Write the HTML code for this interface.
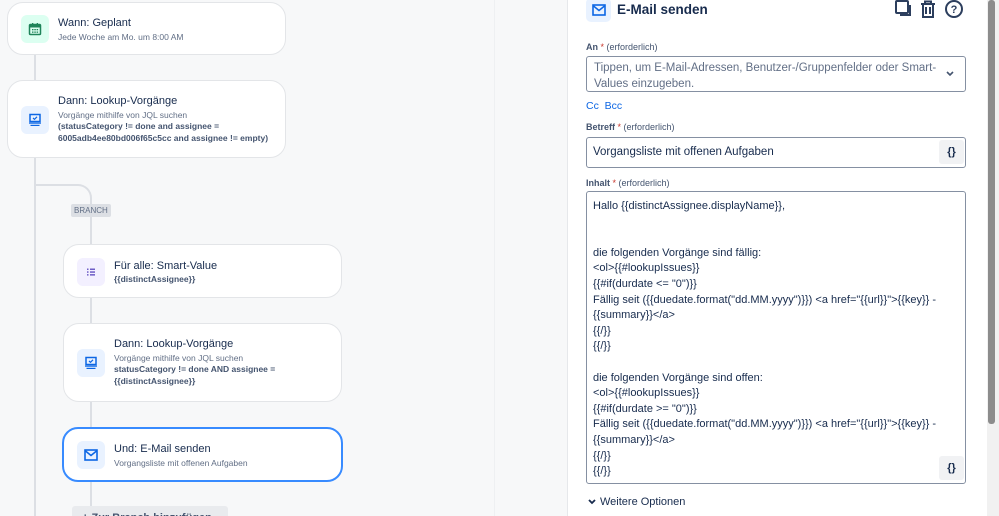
<!DOCTYPE html>
<html><head><meta charset="utf-8">
<style>
*{box-sizing:border-box;margin:0;padding:0}
html,body{width:999px;height:516px;overflow:hidden}
body{background:#f7f8f9;font-family:"Liberation Sans",sans-serif;color:#172b4d;position:relative}
.abs{position:absolute}
.line{position:absolute;background:#dcdfe4}
.card{position:absolute;background:#fff;border:1px solid #e3e5e8;border-radius:16px}
.ic{position:absolute;left:13px;width:28px;height:28px;border-radius:6px;display:flex;align-items:center;justify-content:center}
.t{position:absolute;left:50px;font-size:11px;color:#172b4d}
.s{font-size:8.5px;color:#626f86;margin-top:3px}
.b{font-size:8.5px;font-weight:bold;color:#44546f;line-height:12px}
.lbl{position:absolute;left:586px;font-size:9px;color:#44546f}
.lbl b{color:#44546f}
.lbl i{font-style:normal;color:#c9372c}
.inp{position:absolute;left:586px;width:380px;border:1px solid #8590a2;border-radius:3px;background:#fff;font-size:11.5px;color:#172b4d}
.br{position:absolute;width:25px;height:24px;background:#f1f2f4;border-radius:3px;font-size:11px;font-weight:bold;display:flex;align-items:center;justify-content:center;color:#172b4d}
</style></head><body>
<div class="line" style="left:34px;top:54px;width:2px;height:462px"></div>
<div class="abs" style="left:35px;top:184px;width:57px;height:60px;border-top:2px solid #dcdfe4;border-right:2px solid #dcdfe4;border-top-right-radius:14px"></div>
<div class="line" style="left:90px;top:297px;width:2px;height:219px"></div>
<div class="abs" style="left:71px;top:204px;background:#dcdfe4;color:#626f86;font-size:8px;padding:2px 3px;border-radius:2px">BRANCH</div>

<div class="card" style="left:7px;top:2px;width:279px;height:53px">
 <div class="ic" style="top:12px;background:#dcfff1"><svg width="14" height="14" viewBox="0 0 14 14"><rect x="1.5" y="2.5" width="11" height="10" rx="1" fill="none" stroke="#1f845a" stroke-width="1.5"/><rect x="1.5" y="2.5" width="11" height="3" fill="#1f845a"/><rect x="4" y="1" width="1.3" height="3" fill="#1f845a"/><rect x="8.7" y="1" width="1.3" height="3" fill="#1f845a"/><g fill="#1f845a"><rect x="4" y="7" width="1.5" height="1.3"/><rect x="6.3" y="7" width="1.5" height="1.3"/><rect x="8.6" y="7" width="1.5" height="1.3"/><rect x="4" y="9.5" width="1.5" height="1.3"/><rect x="6.3" y="9.5" width="1.5" height="1.3"/><rect x="8.6" y="9.5" width="1.5" height="1.3"/></g></svg></div>
 <div class="t" style="top:14px">Wann: Geplant<div class="s">Jede Woche am Mo. um 8:00 AM</div></div>
</div>

<div class="card" style="left:7px;top:80px;width:279px;height:78px">
 <div class="ic" style="top:25px;background:#e9f2ff"><svg width="14" height="14" viewBox="0 0 14 14"><rect x="2" y="1.5" width="10" height="7" fill="none" stroke="#0c66e4" stroke-width="1.5"/><path d="M5 5l1.5 1.3L9 3.8" stroke="#0c66e4" stroke-width="1.2" fill="none"/><rect x="1" y="9.5" width="12" height="1.2" fill="#0c66e4"/><rect x="2.5" y="11.8" width="9" height="1.2" fill="#0c66e4"/></svg></div>
 <div class="t" style="top:14px">Dann: Lookup-Vorgänge<div class="s">Vorgänge mithilfe von JQL suchen</div><div class="b">(statusCategory != done and assignee =<br>6005adb4ee80bd006f65c5cc and assignee != empty)</div></div>
</div>

<div class="card" style="left:63px;top:244px;width:279px;height:54px">
 <div class="ic" style="top:13px;background:#f3f0ff"><svg width="14" height="14" viewBox="0 0 14 14" fill="#6e5dc6"><rect x="3" y="3.5" width="1.5" height="1.5"/><rect x="6" y="3.5" width="5" height="1.5"/><rect x="3" y="6.3" width="1.5" height="1.5"/><rect x="6" y="6.3" width="5" height="1.5"/><rect x="3" y="9.1" width="1.5" height="1.5"/><rect x="6" y="9.1" width="5" height="1.5"/></svg></div>
 <div class="t" style="top:15px">Für alle: Smart-Value<div class="b" style="margin-top:1px">{{distinctAssignee}}</div></div>
</div>

<div class="card" style="left:63px;top:323px;width:279px;height:79px">
 <div class="ic" style="top:25px;background:#e9f2ff"><svg width="14" height="14" viewBox="0 0 14 14"><rect x="2" y="1.5" width="10" height="7" fill="none" stroke="#0c66e4" stroke-width="1.5"/><path d="M5 5l1.5 1.3L9 3.8" stroke="#0c66e4" stroke-width="1.2" fill="none"/><rect x="1" y="9.5" width="12" height="1.2" fill="#0c66e4"/><rect x="2.5" y="11.8" width="9" height="1.2" fill="#0c66e4"/></svg></div>
 <div class="t" style="top:14px">Dann: Lookup-Vorgänge<div class="s">Vorgänge mithilfe von JQL suchen</div><div class="b">statusCategory != done AND assignee =<br>{{distinctAssignee}}</div></div>
</div>

<div class="card" style="left:62px;top:427px;width:281px;height:55px;border:2px solid #388bff">
 <div class="ic" style="top:12px;background:#e9f2ff"><svg width="14" height="12" viewBox="0 0 14 12"><rect x="1" y="1" width="12" height="10" fill="none" stroke="#0c66e4" stroke-width="1.6"/><path d="M1.5 2l5.5 4.5L12.5 2" fill="none" stroke="#0c66e4" stroke-width="1.5"/></svg></div>
 <div class="t" style="top:14px">Und: E-Mail senden<div class="s">Vorgangsliste mit offenen Aufgaben</div></div>
</div>
<div class="abs" style="left:72px;top:506px;width:156px;height:14px;background:#e9ebee;border-radius:3px;font-size:11px;font-weight:bold;color:#44546f;padding:6px 0 0 10px">+ Zur Branch hinzufügen</div>

<div class="abs" style="left:494px;top:0;width:1px;height:516px;background:#eef0f2"></div>
<div class="abs" style="left:567px;top:0;width:420px;height:516px;background:#fff;border-left:1px solid #e6e8eb"></div>
<div class="abs" style="left:987px;top:0;width:12px;height:516px;background:#f1f1f1"></div>
<div class="abs" style="left:988px;top:0;width:7px;height:424px;background:#8c8c8c;border-radius:3px"></div>

<div class="abs" style="left:586px;top:-2px;width:25px;height:24px;background:#e9f2ff;border-radius:5px;display:flex;align-items:center;justify-content:center"><svg width="14" height="12" viewBox="0 0 14 12"><rect x="1" y="1" width="12" height="10" fill="none" stroke="#0c66e4" stroke-width="1.6"/><path d="M1.5 2l5.5 4.5L12.5 2" fill="none" stroke="#0c66e4" stroke-width="1.5"/></svg></div>
<div class="abs" style="left:617px;top:2px;font-size:13.5px;font-weight:bold;color:#172b4d">E-Mail senden</div>
<svg class="abs" style="left:893px;top:0" width="72" height="20" viewBox="0 0 72 20"><g fill="none" stroke="#2c3e5d" stroke-width="2"><rect x="3" y="1" width="12" height="12" rx="1"/><path d="M17 5v10H7"/><path d="M28 4h14M32 4V1.5h6V4M30 4v13h10V4M33 7v7M37 7v7"/><circle cx="61" cy="9" r="8"/></g><text x="61" y="13" font-size="11" font-weight="bold" text-anchor="middle" fill="#2c3e5d" font-family="Liberation Sans">?</text></svg>

<div class="lbl" style="top:42px"><b>An</b> <i>*</i> (erforderlich)</div>
<div class="inp" style="top:56px;height:36px;padding:3px 7px;line-height:16px;color:#626f86">Tippen, um E-Mail-Adressen, Benutzer-/Gruppenfelder oder Smart-<br>Values einzugeben.</div>
<svg class="abs" style="left:946px;top:71px" width="8" height="6" viewBox="0 0 8 6"><path d="M1 1l3 3 3-3" stroke="#44546f" stroke-width="1.6" fill="none"/></svg>
<div class="abs" style="left:586px;top:100px;font-size:10.5px;color:#0c66e4">Cc&nbsp;&nbsp;Bcc</div>
<div class="lbl" style="top:122px"><b>Betreff</b> <i>*</i> (erforderlich)</div>
<div class="inp" style="top:137px;height:31px;padding:8px 6px">Vorgangsliste mit offenen Aufgaben</div>
<div class="br" style="left:939px;top:140px">{}</div>
<div class="lbl" style="top:178px"><b>Inhalt</b> <i>*</i> (erforderlich)</div>
<div class="inp" style="top:191px;height:293px;padding:7px 6px;line-height:15.6px;font-size:11px;white-space:pre">Hallo {{distinctAssignee.displayName}},


die folgenden Vorgänge sind fällig:
&lt;ol&gt;{{#lookupIssues}}
{{#if(durdate &lt;= "0")}}
Fällig seit ({{duedate.format("dd.MM.yyyy")}}) &lt;a href="{{url}}"&gt;{{key}} -
{{summary}}&lt;/a&gt;
{{/}}
{{/}}

die folgenden Vorgänge sind offen:
&lt;ol&gt;{{#lookupIssues}}
{{#if(durdate &gt;= "0")}}
Fällig seit ({{duedate.format("dd.MM.yyyy")}}) &lt;a href="{{url}}"&gt;{{key}} -
{{summary}}&lt;/a&gt;
{{/}}
{{/}}</div>
<div class="br" style="left:939px;top:456px">{}</div>
<svg class="abs" style="left:588px;top:499px" width="8" height="6" viewBox="0 0 8 6"><path d="M1 1l3 3 3-3" stroke="#172b4d" stroke-width="1.8" fill="none"/></svg>
<div class="abs" style="left:600px;top:496px;font-size:11px;color:#172b4d">Weitere Optionen</div>
</body></html>
